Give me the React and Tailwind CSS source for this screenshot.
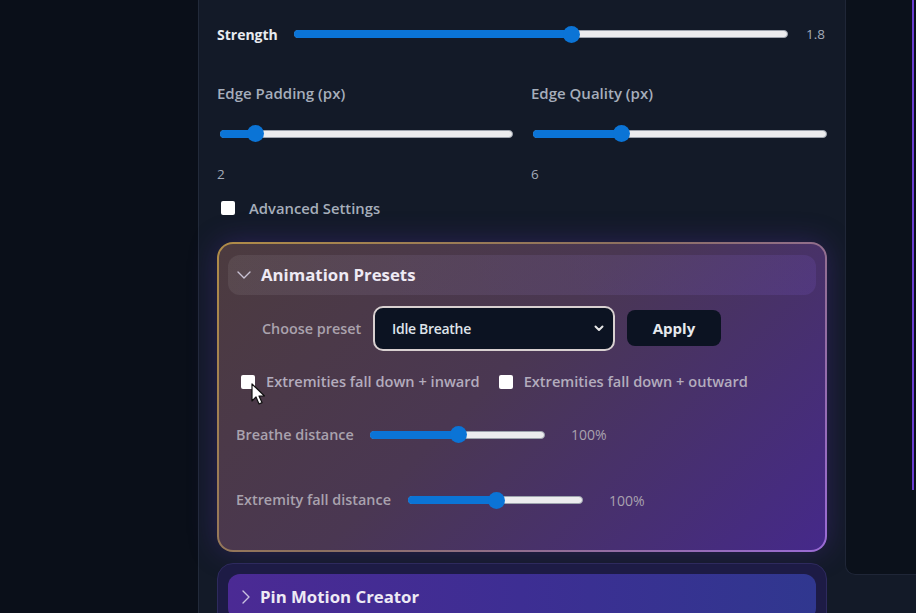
import React from 'react';

function Slider({ value, className = '' }) {
  return (
    <div className={`relative h-[18px] flex items-center ${className}`}>
      <div className="h-[8px] w-full rounded-full bg-[#ececee] border border-[#9da3ad]" />
      <div
        className="absolute left-0 h-[8px] rounded-l-full bg-[#0b74d6]"
        style={{ width: `${value}%` }}
      />
      <div
        className="absolute h-[17px] w-[17px] -ml-[8px] rounded-full bg-[#0b74d6]"
        style={{ left: `${value}%` }}
      />
    </div>
  );
}

function Box() {
  return <div className="h-[14px] w-[14px] shrink-0 rounded-[2px] bg-white" />;
}

function Chevron({ open }) {
  return open ? (
    <svg width="14" height="10" viewBox="0 0 14 10" fill="none">
      <path d="M1 2l6 6 6-6" stroke="#c9c2d4" strokeWidth="1.4" strokeLinecap="round" strokeLinejoin="round" />
    </svg>
  ) : (
    <svg width="9" height="14" viewBox="0 0 9 14" fill="none">
      <path d="M2 1l6 6-6 6" stroke="#c9c2e0" strokeWidth="1.4" strokeLinecap="round" strokeLinejoin="round" />
    </svg>
  );
}

function Cursor() {
  return (
    <svg className="absolute left-[251px] top-[383px]" width="14" height="22" viewBox="0 0 14 22">
      <path d="M1 1v17l4-4 3 7 3-1.4-3-6.6h5.5z" fill="#fff" stroke="#111" strokeWidth="1.2" strokeLinejoin="round" />
    </svg>
  );
}

export default function App() {
  return (
    <div className="relative flex h-[613px] w-[916px] overflow-hidden bg-[#0a0f19] font-['Open_Sans',sans-serif]">
      <div className="w-[198px] shrink-0 bg-[#0a0f19]" />

      <div className="flex flex-1 border-l border-[#222a3a] bg-[#131a28]">
        <div className="w-[646px] shrink-0 pl-[18px] pr-[18px] pt-[22px]">
          {/* Strength */}
          <div className="flex items-center h-[24px]">
            <span className="w-[77px] text-[14px] font-bold text-[#e8ebf0]">Strength</span>
            <Slider value={56} className="w-[494px]" />
            <span className="ml-[18px] text-[13.5px] text-[#a3abb8]">1.8</span>
          </div>

          {/* Edge settings */}
          <div className="mt-[36px] grid grid-cols-2 gap-x-[18px]">
            <div>
              <div className="text-[15px] font-semibold text-[#a6aebb]">Edge Padding (px)</div>
              <Slider value={12} className="ml-[3px] mt-[20px]" />
              <div className="mt-[21px] text-[13.5px] text-[#a3abb8]">2</div>
            </div>
            <div>
              <div className="text-[15px] font-semibold text-[#a6aebb]">Edge Quality (px)</div>
              <Slider value={30} className="ml-[2px] mt-[20px]" />
              <div className="mt-[21px] text-[13.5px] text-[#a3abb8]">6</div>
            </div>
          </div>

          <div className="mt-[13px] flex items-center gap-[14px] pl-[4px]">
            <Box />
            <span className="text-[14.8px] font-semibold text-[#a6aebb]">Advanced Settings</span>
          </div>

          {/* Animation presets */}
          <div className="mt-[23px] rounded-[16px] bg-[linear-gradient(135deg,#b08c48_0%,#8c7060_45%,#9a6bd6_100%)] p-[2px] shadow-[0_0_28px_rgba(90,50,170,0.35)]">
            <div className="h-[306px] rounded-[14px] bg-[linear-gradient(135deg,#4c3b3f_0%,#4a3752_45%,#45298a_100%)] px-[9px] pt-[11px]">
              <div className="flex h-[40px] items-center gap-[10px] rounded-[12px] bg-[linear-gradient(90deg,rgba(255,255,255,0.07),rgba(150,110,255,0.12))] pl-[9px]">
                <Chevron open />
                <span className="text-[16.8px] font-bold text-[#eeeaf4]">Animation Presets</span>
              </div>

              <div className="mt-[11px] flex items-center pl-[34px]">
                <span className="w-[111px] text-[14.4px] font-semibold text-[#aaa2ad]">Choose preset</span>
                <div className="flex h-[45px] w-[242px] items-center justify-between rounded-[10px] border-2 border-[#d8d0d0] bg-[#0c1322] pl-[17px] pr-[9px]">
                  <span className="text-[14px] font-semibold tracking-[-0.3px] text-[#dfe3ea]">Idle Breathe</span>
                  <svg width="10" height="7" viewBox="0 0 10 7" fill="none">
                    <path d="M1.5 1.5l3.5 3.5 3.5-3.5" stroke="#e6e6e6" strokeWidth="2" strokeLinecap="round" strokeLinejoin="round" />
                  </svg>
                </div>
                <div className="ml-[12px] flex h-[36px] w-[94px] items-center justify-center rounded-[8px] bg-[#0c1322] text-[15px] font-bold text-[#e6e9ee]">
                  Apply
                </div>
              </div>

              <div className="mt-[20px] flex items-center pl-[13px]">
                <Box />
                <span className="ml-[11px] text-[14.6px] font-semibold text-[#b3acbd]">Extremities fall down + inward</span>
                <div className="ml-[19px]"><Box /></div>
                <span className="ml-[11px] text-[14.6px] font-semibold text-[#b3acbd]">Extremities fall down + outward</span>
              </div>

              <div className="mt-[31px] flex items-center pl-[8px]">
                <span className="w-[134px] text-[14.4px] font-semibold text-[#a9a2ae]">Breathe distance</span>
                <Slider value={50} className="w-[175px]" />
                <span className="ml-[26px] text-[14px] text-[#a9a2ae]">100%</span>
              </div>

              <div className="mt-[44px] flex items-center pl-[8px]">
                <span className="w-[172px] text-[14.4px] font-semibold text-[#a9a2ae]">Extremity fall distance</span>
                <Slider value={50} className="w-[175px]" />
                <span className="ml-[26px] text-[14px] text-[#a9a2ae]">100%</span>
              </div>
            </div>
          </div>

          {/* Pin motion creator */}
          <div className="mt-[11px] rounded-[16px] border border-[#2e2a5e] bg-[#1d1b45] px-[10px] pt-[10px] pb-[10px]">
            <div className="flex h-[46px] items-center gap-[10px] rounded-[12px] bg-[linear-gradient(90deg,#4b2a94_0%,#3d2e93_50%,#30378f_100%)] pl-[13px]">
              <Chevron />
              <span className="text-[16.8px] font-bold text-[#eeeaf4]">Pin Motion Creator</span>
            </div>
          </div>
        </div>

        <div className="relative h-[575px] flex-1 rounded-bl-[10px] border-b border-l border-[#1f2637] bg-[#0b111b]">
          <div className="absolute right-[2px] top-0 h-[490px] w-[2px] bg-[#6a3ed0]" />
        </div>
      </div>

      <Cursor />
    </div>
  );
}
